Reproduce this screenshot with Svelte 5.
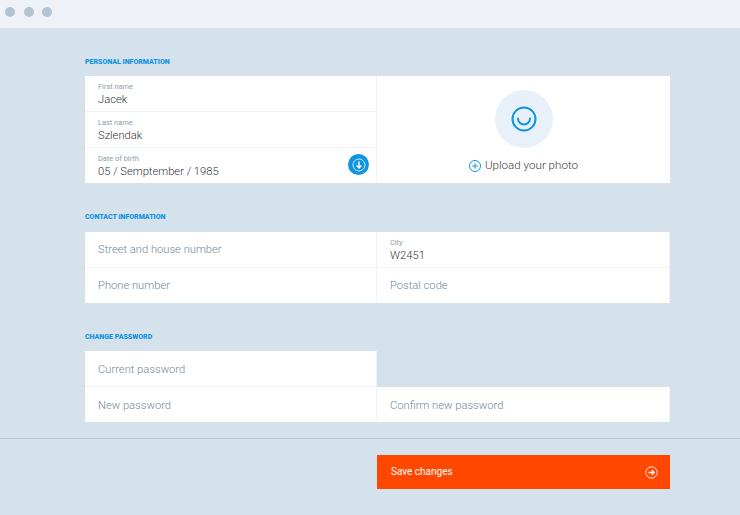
<script>
  const contact = [
    { placeholder: 'Street and house number' },
    { label: 'City', value: 'W2451' },
    { placeholder: 'Phone number' },
    { placeholder: 'Postal code' },
  ];
</script>

{#snippet field(f)}
  <div class="field">
    {#if f.label}
      <span class="label">{f.label}</span>
      <span class="value">{f.value}</span>
    {:else}
      <span class="placeholder">{f.placeholder}</span>
    {/if}
  </div>
{/snippet}

<div class="window">
  <header class="titlebar">
    <i></i><i></i><i></i>
  </header>

  <main class="content">
    <section class="personal">
      <h2>Personal information</h2>
      <div class="card two-col">
        <div class="stack">
          {@render field({ label: 'First name', value: 'Jacek' })}
          {@render field({ label: 'Last name', value: 'Szlendak' })}
          <div class="date">
            {@render field({ label: 'Date of birth', value: '05 / Semptember / 1985' })}
            <span class="date-btn">
              <svg width="14" height="14" viewBox="0 0 14 14" fill="none" stroke="#fff">
                <circle cx="7" cy="7" r="6" stroke-opacity=".75" />
                <path d="M7 3.6v6.4M4.6 7.6 7 10l2.4-2.4" stroke-width="1.4" />
              </svg>
            </span>
          </div>
        </div>
        <div class="photo">
          <div class="avatar">
            <svg width="26" height="26" viewBox="0 0 26 26" fill="none" stroke="#0f94e2" stroke-width="2">
              <circle cx="13" cy="13" r="11.5" />
              <path d="M7 12.5a6 6 0 0 0 12 0" stroke-linecap="round" />
            </svg>
          </div>
          <div class="upload">
            <svg width="12" height="12" viewBox="0 0 12 12" fill="none" stroke="#0f94e2">
              <circle cx="6" cy="6" r="5.5" />
              <path d="M6 3.2v5.6M3.2 6h5.6" />
            </svg>
            Upload your photo
          </div>
        </div>
      </div>
    </section>

    <section class="contact">
      <h2>Contact information</h2>
      <div class="card grid">
        {#each contact as f}
          {@render field(f)}
        {/each}
      </div>
    </section>

    <section class="password">
      <h2>Change password</h2>
      <div class="grid">
        {@render field({ placeholder: 'Current password' })}
        <div class="blank"></div>
        {@render field({ placeholder: 'New password' })}
        {@render field({ placeholder: 'Confirm new password' })}
      </div>
    </section>
  </main>

  <footer class="actions">
    <button class="save">
      <span class="save-text">Save changes</span>
      <svg width="13" height="13" viewBox="0 0 13 13" fill="none" stroke="#fff">
        <circle cx="6.5" cy="6.5" r="5.7" stroke-opacity=".85" />
        <path d="M3.6 6.5h5.4M6.8 4.2l2.3 2.3-2.3 2.3" stroke-width="1.4" />
      </svg>
    </button>
  </footer>
</div>

<style>
  :global(body) {
    background: #d5e1eb;
    font-family: Roboto, "Liberation Sans", sans-serif;
  }

  .window {
    height: 515px;
    overflow: hidden;
  }

  .titlebar {
    height: 28px;
    background: #eef2f7;
    display: flex;
    align-items: center;
    gap: 8.5px;
    padding: 0 0 4px 5px;
    box-sizing: border-box;
  }

  .titlebar i {
    width: 10px;
    height: 10px;
    border-radius: 50%;
    background: #b3c3d1;
  }

  .content {
    padding: 27px 70px 0 85px;
    display: flex;
    flex-direction: column;
    gap: 27px;
  }

  h2 {
    margin: 0 0 8px;
    font-size: 7px;
    line-height: 14px;
    font-weight: 900;
    text-transform: uppercase;
    color: #0f94e2;
  }

  .personal h2,
  .password h2 {
    margin-bottom: 7px;
  }

  .two-col,
  .grid {
    display: grid;
    grid-template-columns: 292px 293px;
  }

  .grid {
    gap: 1px 0;
  }

  .card {
    background: #eef3f8;
  }

  .stack {
    display: flex;
    flex-direction: column;
    gap: 1px;
    border-right: 1px solid #eef3f8;
  }

  .field {
    height: 35px;
    box-sizing: border-box;
    background: #fff;
    padding-left: 13px;
    display: flex;
    flex-direction: column;
    justify-content: center;
    border-right: 1px solid #eef3f8;
  }

  .stack .field {
    border-right: 0;
  }

  .label {
    font-size: 7.4px;
    line-height: 9px;
    color: #8c9dab;
    margin-top: 1px;
  }

  .value {
    font-size: 11.2px;
    font-weight: 300;
    line-height: 15px;
    margin-top: 1px;
    color: #2f3538;
  }

  .placeholder {
    font-size: 11.2px;
    font-weight: 300;
    margin-top: -1px;
    color: #72889a;
  }

  .password .placeholder {
    margin-top: 1px;
  }

  .date {
    position: relative;
  }

  .date-btn {
    position: absolute;
    right: 7px;
    top: 6px;
    width: 21px;
    height: 21px;
    border-radius: 50%;
    background: #0f94e2;
    display: flex;
    align-items: center;
    justify-content: center;
  }

  .photo {
    background: #fff;
    display: flex;
    flex-direction: column;
    align-items: center;
  }

  .avatar {
    width: 58px;
    height: 58px;
    margin-top: 14px;
    border-radius: 50%;
    background: #e8f1f9;
    display: flex;
    align-items: center;
    justify-content: center;
  }

  .upload {
    margin-top: 10px;
    display: flex;
    align-items: center;
    gap: 4px;
    font-size: 11.6px;
    font-weight: 300;
    line-height: 15px;
    color: #3c4246;
  }

  .password .grid {
    gap: 0;
    grid-template-rows: 36px 35px;
  }

  .password .field:first-child {
    height: 36px;
    border-bottom: 1px solid #eef3f8;
  }

  .actions {
    margin-top: 16px;
    border-top: 1px solid #b9c8d6;
    padding: 16px 70px 0 377px;
  }

  .save {
    width: 293px;
    height: 34px;
    padding: 0 12px 0 14px;
    border: 0;
    background: #ff4700;
    color: #fff;
    font: 400 10px Roboto, sans-serif;
    display: flex;
    align-items: center;
    justify-content: space-between;
  }

  .save-text {
    margin-top: -2px;
  }
</style>
